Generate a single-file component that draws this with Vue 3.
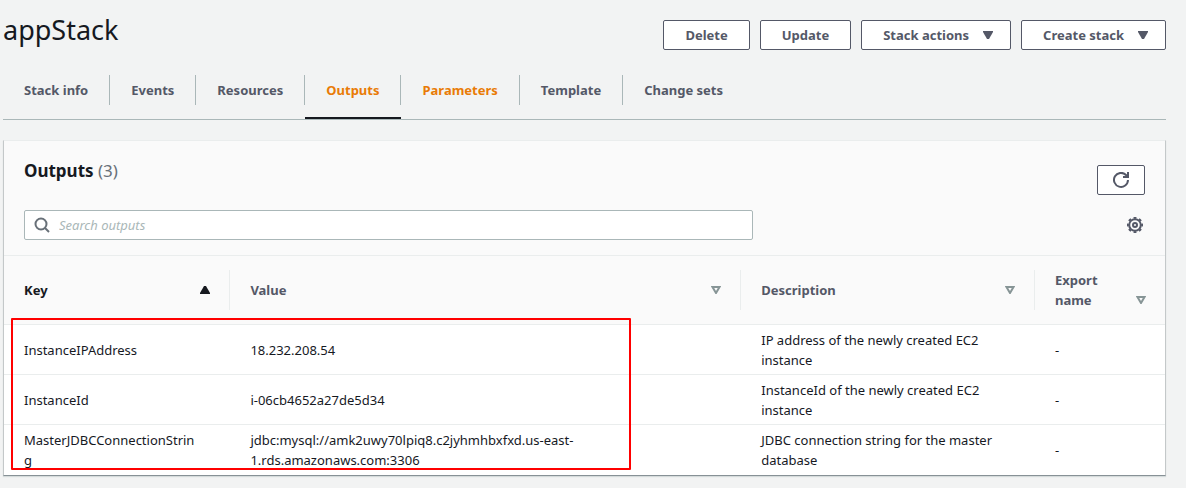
<script setup>
import { ref } from 'vue'

const tabs = [
  { name: 'Stack info' },
  { name: 'Events' },
  { name: 'Resources' },
  { name: 'Outputs', active: true },
  { name: 'Parameters', hot: true },
  { name: 'Template' },
  { name: 'Change sets' },
]

const columns = [
  { name: 'Key', cls: 'col-key', sorted: true },
  { name: 'Value', cls: 'col-value' },
  { name: 'Description', cls: 'col-description' },
  { name: 'Export name', cls: 'col-export' },
]

// Values are lists of segments; a line may break between segments.
const rows = [
  { key: 'InstanceIPAddress', value: ['18.232.208.54'], description: 'IP address of the newly created EC2 instance' },
  { key: 'InstanceId', value: ['i-06cb4652a27de5d34'], description: 'InstanceId of the newly created EC2 instance' },
  {
    key: 'MasterJDBCConnectionString',
    value: ['jdbc:mysql://amk2uwy70lpiq8.c2jyhmhbxfxd.us-east-', '1.rds.amazonaws.com:3306'],
    description: 'JDBC connection string for the master database',
  },
]

const query = ref('')
</script>

<template>
  <main class="page">
    <header class="top">
      <h1>appStack</h1>
      <div class="actions">
        <button class="btn" type="button">Delete</button>
        <button class="btn" type="button">Update</button>
        <button class="btn" type="button">
          Stack actions
          <svg class="caret" viewBox="0 0 10 8" aria-hidden="true"><path d="M0 0h10v1L6 8H4L0 1z" /></svg>
        </button>
        <button class="btn" type="button">
          Create stack
          <svg class="caret" viewBox="0 0 10 8" aria-hidden="true"><path d="M0 0h10v1L6 8H4L0 1z" /></svg>
        </button>
      </div>
    </header>

    <nav class="tabs">
      <a
        v-for="t in tabs"
        :key="t.name"
        href="#"
        class="tab"
        :class="{ active: t.active, hot: t.hot }"
      ><span>{{ t.name }}</span></a>
    </nav>

    <section class="panel">
      <div class="panel-head">
        <div class="title-row">
          <h2>Outputs <span class="count">(3)</span></h2>
          <button class="btn refresh" type="button" aria-label="Refresh">
            <svg viewBox="0 0 16 16" aria-hidden="true">
              <path d="M15 8a7 7 0 1 1-2-5l2 2" />
              <path d="M15 0v5h-5" />
            </svg>
          </button>
        </div>
        <div class="filter-row">
          <label class="search">
            <svg viewBox="0 0 16 16" aria-hidden="true">
              <circle cx="7" cy="7" r="5.500" />
              <path d="M11 11l4 4" />
            </svg>
            <input v-model="query" type="text" placeholder="Search outputs" aria-label="Search outputs" />
          </label>
          <button class="gear" type="button" aria-label="Preferences">
            <svg viewBox="0 0 16 16" aria-hidden="true">
              <circle cx="8" cy="8" r="5.800" />
              <circle class="teeth" cx="8" cy="8" r="7.200" pathLength="80" />
              <circle cx="8" cy="8" r="2" />
            </svg>
          </button>
        </div>
      </div>

      <table>
        <thead>
          <tr>
            <th v-for="c in columns" :key="c.name" :class="[c.cls, { sorted: c.sorted }]" scope="col">
              <div class="th-inner">
                <span>{{ c.name }}</span>
                <svg v-if="c.sorted" class="sort up" viewBox="0 0 10 8" aria-hidden="true"><path d="M4 0h2l4 7v1H0V7z" /></svg>
                <svg v-else class="sort" viewBox="0 0 10 8" aria-hidden="true"><path d="M1.500 1h7L5 7z" /></svg>
              </div>
            </th>
          </tr>
        </thead>
        <tbody>
          <tr v-for="r in rows" :key="r.key">
            <td class="key">{{ r.key }}</td>
            <td><template v-for="(s, i) in r.value" :key="i"><wbr v-if="i" />{{ s }}</template></td>
            <td>{{ r.description }}</td>
            <td>-</td>
          </tr>
        </tbody>
      </table>
      <div class="highlight"></div>
    </section>
  </main>
</template>

<style>
body {
  background: #f2f3f3;
}
</style>

<style scoped>
.page {
  padding: 10px 20px 12px 3px;
  font: 13px/20px "Noto Sans", "Open Sans", sans-serif;
  color: #16191f;
}
.page *,
.page {
  box-sizing: border-box;
}
.top {
  display: flex;
  justify-content: space-between;
  align-items: flex-start;
}
h1 {
  margin: 0;
  font-size: 27px;
  line-height: 40px;
  font-weight: 400;
}
.actions {
  display: flex;
  gap: 10px;
  padding-top: 10px;
}
.btn {
  display: flex;
  align-items: center;
  gap: 14px;
  height: 30px;
  padding: 0 21px;
  border: 1px solid #545867;
  border-radius: 2px;
  background: #fff;
  color: #545867;
  font: inherit;
  font-weight: 700;
  white-space: nowrap;
}
.caret {
  width: 10px;
  height: 8px;
  margin-right: -4px;
  fill: #545867;
}
.tabs {
  display: flex;
  margin-top: 15px;
  padding-top: 10px;
  border-bottom: 1px solid #aab7b8;
}
.tab {
  height: 44px;
  color: #545867;
  font-weight: 700;
  text-decoration: none;
  white-space: nowrap;
}
.tab span {
  display: block;
  padding: 5px 21px;
  border-right: 1px solid #aab7b8;
}
.tab:last-child span {
  border-right: 0;
}
.tab.hot,
.tab.active {
  color: #e97b06;
}
.tab.active {
  border-bottom: 2px solid #16191f;
}
.panel {
  position: relative;
  margin-top: 20px;
  background: #fff;
  border: 1px solid #eaeded;
  border-color: #eaeded #c4c8c9 #879196 #c4c8c9;
  box-shadow: 0 1px 1px #d5dbdb;
}
.panel-head {
  padding: 14px 20px 15px;
  background: #fafafa;
  border-bottom: 1px solid #eaeded;
}
.title-row {
  display: flex;
  justify-content: space-between;
  height: 40px;
}
h2 {
  margin: 0;
  font-size: 17px;
  line-height: 32px;
  font-weight: 700;
}
.count {
  color: #687078;
  font-weight: 400;
}
.refresh {
  justify-content: center;
  width: 48px;
  padding: 0;
  margin-top: 10px;
}
.refresh svg,
.gear svg,
.search svg {
  width: 16px;
  height: 16px;
  flex: none;
  fill: none;
  stroke: #545867;
  stroke-width: 2;
}
.search svg {
  stroke: #687078;
}
.gear .teeth {
  stroke-dasharray: 5 5;
  stroke-dashoffset: 2.5;
}
.filter-row {
  display: flex;
  justify-content: space-between;
  align-items: center;
  margin-top: 15px;
}
.search {
  display: flex;
  align-items: center;
  gap: 9px;
  width: 65%;
  height: 30px;
  padding: 0 9px;
  background: #fff;
  border: 1px solid #aab7b8;
  border-radius: 2px;
}
.search input {
  flex: 1;
  min-width: 0;
  padding: 0;
  border: 0;
  outline: 0;
  background: none;
  color: #16191f;
  font: inherit;
}
.search input::placeholder {
  color: #aab7b8;
  font-style: italic;
  opacity: 1;
}
.gear {
  display: flex;
  padding: 0;
  margin-right: 2px;
  border: 0;
  background: none;
}
table {
  width: 100%;
  table-layout: fixed;
  border-collapse: collapse;
}
.col-key {
  width: 19.5%;
}
.col-value {
  width: 44%;
}
.col-description {
  width: 25.3%;
}
th {
  padding: 14px 0;
  background: #fafafa;
  border-bottom: 1px solid #eaeded;
  color: #545867;
  text-align: left;
}
th.sorted {
  color: #16191f;
}
.th-inner {
  display: flex;
  align-items: center;
  justify-content: space-between;
  height: 40px;
  padding: 0 19px 0 20px;
  border-right: 1px solid #eaeded;
}
.col-export .th-inner {
  align-items: flex-end;
  border-right: 0;
}
.col-export .sort {
  margin-bottom: 6px;
}
.col-export span {
  width: min-content;
}
.sort {
  width: 10px;
  height: 8px;
  flex: none;
  fill: none;
  stroke: #879596;
  stroke-width: 2;
}
.sort.up {
  fill: #16191f;
  stroke: none;
}
td {
  height: 50px;
  padding: 5px 24px 4px 20px;
  border-bottom: 1px solid #eaeded;
  vertical-align: middle;
}
tbody tr:last-child td {
  border-bottom: 0;
}
td.key {
  padding-right: 32px;
  word-break: break-all;
}
.highlight {
  position: absolute;
  top: 177px;
  left: 7px;
  width: 620px;
  height: 152px;
  border: 2px solid #f00;
  border-radius: 1px;
  pointer-events: none;
}
</style>
